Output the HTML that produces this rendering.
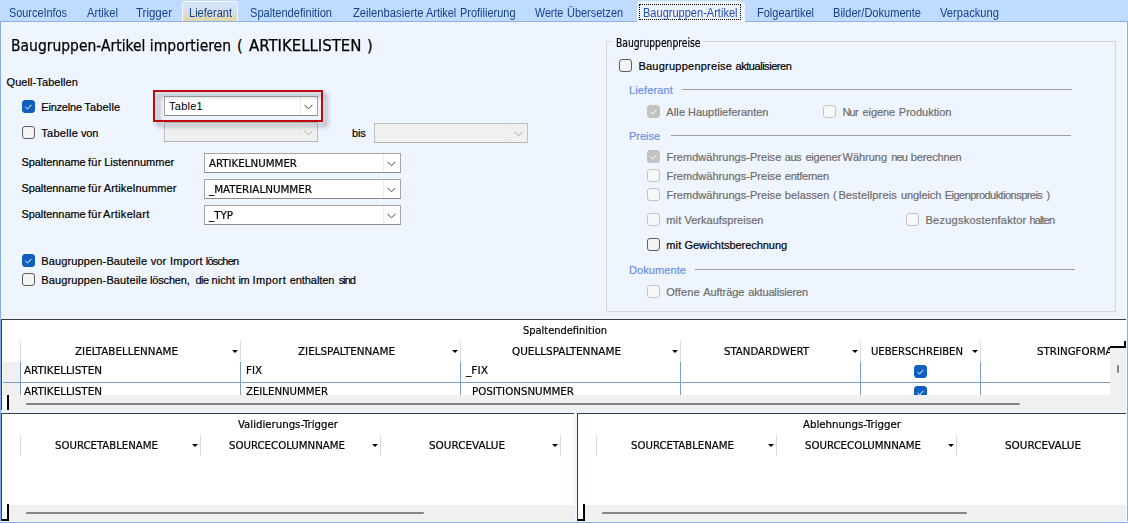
<!DOCTYPE html>
<html lang="de">
<head>
<meta charset="utf-8">
<title>Baugruppen-Artikel importieren</title>
<style>
html,body{margin:0;padding:0;}
body{width:1128px;height:523px;position:relative;overflow:hidden;background:#eff5fe;font-family:"Liberation Sans","DejaVu Sans",sans-serif;font-size:12px;color:#000;}
.abs,.t,.cb,.combo,.ln,.box{position:absolute;box-sizing:border-box;}
.t{white-space:pre;line-height:14px;height:14px;transform-origin:0 50%;}
/* tab bar */
#tabbar{left:0;top:0;width:1128px;height:22px;background:#bfdbff;border-bottom:1px solid #8fb1e6;}
.tab{font-size:12px;color:#15428b;top:6px;}
/* fonts */
.tah{font-family:"DejaVu Sans","Liberation Sans",sans-serif;font-stretch:condensed;font-size:11px;margin-top:1px;-webkit-text-stroke:0.2px currentColor;}
.seg{font-family:"Liberation Sans","DejaVu Sans",sans-serif;font-size:11px;-webkit-text-stroke:0.2px currentColor;}
.dis{color:#6d6d6d;}
.blue{color:#6a90e6;}
/* checkboxes */
.cb{width:13px;height:13px;border-radius:3px;border:1px solid #5f5f5f;background:#f4f4f4;}
.cb.on{background:#0f5fc0;border-color:#0f5fc0;}
.cb.don{background:#c2c2c2;border-color:#c2c2c2;}
.cb.doff{background:#f7f8fa;border-color:#c4c4c4;}
.cb svg{position:absolute;left:-1px;top:-1px;width:13px;height:13px;}
/* combos */
.combo{height:20px;border:1px solid #a4a4a4;border-bottom-color:#8c8c8c;background:#fff;}
.combo.d{background:#f0f0f0;border-color:#c0c0c0;border-bottom-color:#b4b4b4;}
.combo .btn{position:absolute;right:0;top:0;width:16px;height:18px;border-left:1px solid #ebebeb;}
.combo svg{position:absolute;right:4px;top:7px;width:9px;height:6px;}
.ln{height:1px;background:#a19a9a;}
/* grids */
.grid{background:#fff;}
.hsep{width:1px;background:#dcdcdc;}
.gl{background:#7d9cc8;}
.hd{font-family:"DejaVu Sans","Liberation Sans",sans-serif;font-stretch:condensed;font-size:11px;text-align:center;margin-top:1px;-webkit-text-stroke:0.2px currentColor;}
.arr{width:0;height:0;border-left:3px solid transparent;border-right:3px solid transparent;border-top:3px solid #000;}
.sb{background:#f0f0f0;}
.thumb{height:2px;background:#858585;border-radius:1px;}
.k{background:#000;}
</style>
</head>
<body>
<!-- TAB BAR -->
<div id="tabbar" class="abs"></div>
<div class="abs" style="left:182px;top:1px;width:56px;height:20px;border:1px solid #f4f8ff;border-bottom:none;border-radius:3px 3px 0 0;background:linear-gradient(#d2e4ff 0%,#d6e0ee 45%,#e4d6a6 100%);"></div>
<div class="abs" style="left:637px;top:1px;width:108px;height:22px;border-radius:4px 4px 0 0;background:#eff5fe;"></div>
<div class="abs" style="left:639px;top:4px;width:102px;height:16px;border:1px dotted #000;"></div>
<span class="t tab" style="left:9px;--w:58;transform:scaleX(0.9056);">SourceInfos</span>
<span class="t tab" style="left:87px;--w:31;transform:scaleX(0.9297);">Artikel</span>
<span class="t tab" style="left:136px;--w:36;transform:scaleX(0.9580);">Trigger</span>
<span class="t tab" style="left:189px;--w:43;transform:scaleX(0.9207);">Lieferant</span>
<span class="t tab" style="left:250px;--w:82;transform:scaleX(0.9241);">Spaltendefinition</span>
<span class="t tab" style="left:353px;--w:70.5;transform:scaleX(0.9353);">Zeilenbasierte</span> <span class="t tab" style="left:425.6px;--w:30.3;transform:scaleX(0.9087);">Artikel</span> <span class="t tab" style="left:460.2px;--w:55.5;transform:scaleX(0.9143);">Profilierung</span>
<span class="t tab" style="left:535.1px;--w:28.3;transform:scaleX(0.8900);">Werte</span> <span class="t tab" style="left:567.3px;--w:56.1;transform:scaleX(0.9141);">Übersetzen</span>
<span class="t tab" style="left:643px;color:#2148b8;--w:94.5;transform:scaleX(0.9198);">Baugruppen-Artikel</span>
<span class="t tab" style="left:757px;--w:57;transform:scaleX(0.9189);">Folgeartikel</span>
<span class="t tab" style="left:833px;--w:88;transform:scaleX(0.9225);">Bilder/Dokumente</span>
<span class="t tab" style="left:940px;--w:59;transform:scaleX(0.9307);">Verpackung</span>


<!-- TITLE -->
<span class="t" style="left:11px;top:36px;font-family:'DejaVu Sans','Liberation Sans',sans-serif;font-stretch:condensed;font-size:16px;line-height:20px;height:20px;-webkit-text-stroke:0.25px #000;--w:220;transform:scaleX(0.9664);">Baugruppen-Artikel importieren</span>
<span class="t" style="left:237px;top:36px;font-family:'DejaVu Sans','Liberation Sans',sans-serif;font-stretch:condensed;font-size:16px;line-height:20px;height:20px;-webkit-text-stroke:0.25px #000;">(</span>
<span class="t" style="left:249px;top:36px;font-family:'DejaVu Sans','Liberation Sans',sans-serif;font-stretch:condensed;font-size:16px;line-height:20px;height:20px;-webkit-text-stroke:0.25px #000;--w:112.5;transform:scaleX(1.0387);">ARTIKELLISTEN</span>
<span class="t" style="left:367px;top:36px;font-family:'DejaVu Sans','Liberation Sans',sans-serif;font-stretch:condensed;font-size:16px;line-height:20px;height:20px;-webkit-text-stroke:0.25px #000;">)</span>

<!-- LEFT FORM -->
<span class="t seg" style="left:6.5px;top:75px;--w:71.5;letter-spacing:0.084px;/*fit*/">Quell-Tabellen</span>

<div class="cb on" style="left:22px;top:100px;"><svg viewBox="0 0 13 13"><path d="M3.4 7 L5.6 9 L9.4 4.8" fill="none" stroke="#fff" stroke-width="1"/></svg></div>
<span class="t seg" style="left:41.3px;top:100px;--w:40.5;letter-spacing:-0.213px;/*fit*/">Einzelne</span> <span class="t seg" style="left:84.3px;top:100px;--w:36.0;letter-spacing:0.163px;/*fit*/">Tabelle</span>
<div class="combo" style="left:164px;top:96px;width:154px;"><div class="btn"></div><svg viewBox="0 0 9 6"><path d="M0.5 0.8 L4.5 4.8 L8.5 0.8" fill="none" stroke="#444" stroke-width="1"/></svg></div>
<span class="t seg" style="left:169px;top:99px;-webkit-text-stroke:0;--w:34;letter-spacing:0.263px;/*fit*/">Table1</span>

<div class="cb" style="left:22px;top:126px;"></div>
<span class="t seg" style="left:41.3px;top:126px;--w:36.8;letter-spacing:0.277px;/*fit*/">Tabelle</span> <span class="t seg" style="left:81.1px;top:126px;--w:16.9;letter-spacing:-0.283px;/*fit*/">von</span>
<div class="combo d" style="left:164px;top:122px;width:154px;"><div class="btn"></div><svg viewBox="0 0 9 6"><path d="M0.5 0.8 L4.5 4.8 L8.5 0.8" fill="none" stroke="#a8a8a8" stroke-width="1"/></svg></div>
<span class="t seg" style="left:352px;top:126px;--w:13.5;letter-spacing:-0.188px;/*fit*/">bis</span>
<div class="combo d" style="left:374px;top:123px;width:154px;"><div class="btn"></div><svg viewBox="0 0 9 6"><path d="M0.5 0.8 L4.5 4.8 L8.5 0.8" fill="none" stroke="#a8a8a8" stroke-width="1"/></svg></div>

<span class="t seg" style="left:21.5px;top:155px;--w:64.1;letter-spacing:-0.066px;/*fit*/">Spaltenname</span> <span class="t seg" style="left:88px;top:155px;--w:13.7;letter-spacing:0.285px;/*fit*/">für</span> <span class="t seg" style="left:104.2px;top:155px;--w:70.1;letter-spacing:0.033px;/*fit*/">Listennummer</span>
<div class="combo" style="left:204px;top:153px;width:197px;"><div class="btn"></div><svg viewBox="0 0 9 6"><path d="M0.5 0.8 L4.5 4.8 L8.5 0.8" fill="none" stroke="#444" stroke-width="1"/></svg></div>
<span class="t tah" style="left:209px;top:156px;--w:88;transform:scaleX(1.0364);">ARTIKELNUMMER</span>

<span class="t seg" style="left:21.5px;top:181px;--w:64.1;letter-spacing:-0.066px;/*fit*/">Spaltenname</span> <span class="t seg" style="left:88px;top:181px;--w:13.7;letter-spacing:0.285px;/*fit*/">für</span> <span class="t seg" style="left:103.7px;top:181px;--w:73.0;letter-spacing:0.161px;/*fit*/">Artikelnummer</span>
<div class="combo" style="left:204px;top:179px;width:197px;"><div class="btn"></div><svg viewBox="0 0 9 6"><path d="M0.5 0.8 L4.5 4.8 L8.5 0.8" fill="none" stroke="#444" stroke-width="1"/></svg></div>
<span class="t tah" style="left:209px;top:182px;--w:103;transform:scaleX(1.0444);">_MATERIALNUMMER</span>

<span class="t seg" style="left:21.5px;top:207px;--w:64.1;letter-spacing:-0.066px;/*fit*/">Spaltenname</span> <span class="t seg" style="left:88px;top:207px;--w:13.7;letter-spacing:0.285px;/*fit*/">für</span> <span class="t seg" style="left:103px;top:207px;--w:46.7;letter-spacing:0.329px;/*fit*/">Artikelart</span>
<div class="combo" style="left:204px;top:205px;width:197px;"><div class="btn"></div><svg viewBox="0 0 9 6"><path d="M0.5 0.8 L4.5 4.8 L8.5 0.8" fill="none" stroke="#444" stroke-width="1"/></svg></div>
<span class="t tah" style="left:209px;top:208px;--w:24;transform:scaleX(1.0435);">_TYP</span>

<div class="cb on" style="left:22px;top:254px;"><svg viewBox="0 0 13 13"><path d="M3.4 7 L5.6 9 L9.4 4.8" fill="none" stroke="#fff" stroke-width="1"/></svg></div>
<span class="t seg" style="left:41.3px;top:254px;--w:105.9;letter-spacing:0.134px;/*fit*/">Baugruppen-Bauteile</span> <span class="t seg" style="left:150.7px;top:254px;--w:15.5;letter-spacing:0.073px;/*fit*/">vor</span> <span class="t seg" style="left:170px;top:254px;--w:32.8;letter-spacing:0.269px;/*fit*/">Import</span> <span class="t seg" style="left:205.7px;top:254px;--w:32.8;letter-spacing:-0.732px;/*fit*/">löschen</span>
<div class="cb" style="left:22px;top:273px;"></div>
<span class="t seg" style="left:41.3px;top:273px;--w:105.9;letter-spacing:0.134px;/*fit*/">Baugruppen-Bauteile</span> <span class="t seg" style="left:150.1px;top:273px;--w:39.5;letter-spacing:-0.186px;/*fit*/">löschen,</span> <span class="t seg" style="left:195.5px;top:273px;--w:13.1;letter-spacing:-0.529px;/*fit*/">die</span> <span class="t seg" style="left:211.5px;top:273px;--w:23.5;letter-spacing:0.050px;/*fit*/">nicht</span> <span class="t seg" style="left:238.5px;top:273px;--w:10.5;letter-spacing:-0.555px;/*fit*/">im</span> <span class="t seg" style="left:252.5px;top:273px;--w:33.6;letter-spacing:0.402px;/*fit*/">Import</span> <span class="t seg" style="left:289.7px;top:273px;--w:44.7;letter-spacing:-0.063px;/*fit*/">enthalten</span> <span class="t seg" style="left:338.8px;top:273px;--w:16.1;letter-spacing:-1.022px;/*fit*/">sind</span>

<div class="abs" style="left:153px;top:90px;width:170px;height:32px;border:2px solid #bd0a10;filter:drop-shadow(4px 4px 2.5px rgba(40,45,60,0.55));z-index:5;"></div>
<!-- RIGHT GROUP BOX -->
<div class="box" style="left:606px;top:41px;width:510px;height:271px;border:1px solid #d9d7d5;"></div>
<div class="abs" style="left:612px;top:38px;width:91px;height:8px;background:#eff5fe;"></div>
<span class="t tah" style="left:615.5px;top:35px;font-size:11.5px;--w:84.5;transform:scaleX(0.8893);">Baugruppenpreise</span>

<div class="cb" style="left:619px;top:59px;"></div>
<span class="t seg" style="left:638.4px;top:59px;--w:93.8;letter-spacing:0.243px;/*fit*/">Baugruppenpreise</span> <span class="t seg" style="left:735.6px;top:59px;--w:55.7;letter-spacing:-0.467px;/*fit*/">aktualisieren</span>

<span class="t seg blue" style="left:629px;top:83px;--w:44;letter-spacing:0.132px;/*fit*/">Lieferant</span>
<div class="ln" style="left:682px;top:89px;width:390px;"></div>
<div class="cb don" style="left:647px;top:105px;"><svg viewBox="0 0 13 13"><path d="M3.4 7 L5.6 9 L9.4 4.8" fill="none" stroke="#fff" stroke-width="1"/></svg></div>
<span class="t seg dis" style="left:666.2px;top:105px;--w:19.1;letter-spacing:0.189px;/*fit*/">Alle</span> <span class="t seg dis" style="left:688px;top:105px;--w:80.4;letter-spacing:-0.021px;/*fit*/">Hauptlieferanten</span>
<div class="cb doff" style="left:823px;top:105px;"></div>
<span class="t seg dis" style="left:842.4px;top:105px;--w:15.6;letter-spacing:-0.711px;/*fit*/">Nur</span> <span class="t seg dis" style="left:862.6px;top:105px;--w:32.4;letter-spacing:-0.108px;/*fit*/">eigene</span> <span class="t seg dis" style="left:898.8px;top:105px;--w:52.6;letter-spacing:0.001px;/*fit*/">Produktion</span>

<span class="t seg blue" style="left:629px;top:129px;--w:31;letter-spacing:-0.031px;/*fit*/">Preise</span>
<div class="ln" style="left:671px;top:135px;width:400px;"></div>
<div class="cb don" style="left:647px;top:150px;"><svg viewBox="0 0 13 13"><path d="M3.4 7 L5.6 9 L9.4 4.8" fill="none" stroke="#fff" stroke-width="1"/></svg></div>
<span class="t seg dis" style="left:666.4px;top:150px;--w:114.9;letter-spacing:0.029px;/*fit*/">Fremdwährungs-Preise</span> <span class="t seg dis" style="left:784.8px;top:150px;--w:16.3;letter-spacing:-0.483px;/*fit*/">aus</span> <span class="t seg dis" style="left:805.4px;top:150px;--w:35.5;letter-spacing:-0.172px;/*fit*/">eigener</span> <span class="t seg dis" style="left:842.6px;top:150px;--w:44.4;letter-spacing:-0.034px;/*fit*/">Währung</span> <span class="t seg dis" style="left:891.2px;top:150px;--w:16.0;letter-spacing:-0.786px;/*fit*/">neu</span> <span class="t seg dis" style="left:910.7px;top:150px;--w:50.7;letter-spacing:-0.144px;/*fit*/">berechnen</span>
<div class="cb doff" style="left:647px;top:169px;"></div>
<span class="t seg dis" style="left:666.4px;top:169px;--w:114.9;letter-spacing:0.029px;/*fit*/">Fremdwährungs-Preise</span> <span class="t seg dis" style="left:784.8px;top:169px;--w:44.0;letter-spacing:-0.276px;/*fit*/">entfernen</span>
<div class="cb doff" style="left:647px;top:188px;"></div>
<span class="t seg dis" style="left:666.4px;top:188px;--w:114.9;letter-spacing:0.029px;/*fit*/">Fremdwährungs-Preise</span> <span class="t seg dis" style="left:784.8px;top:188px;--w:44.7;letter-spacing:0.082px;/*fit*/">belassen</span> <span class="t seg dis" style="left:833px;top:188px;">(</span> <span class="t seg dis" style="left:838.4px;top:188px;--w:58.5;letter-spacing:0.137px;/*fit*/">Bestellpreis</span> <span class="t seg dis" style="left:901.1px;top:188px;--w:40.1;letter-spacing:-0.111px;/*fit*/">ungleich</span> <span class="t seg dis" style="left:944.8px;top:188px;--w:97.5;letter-spacing:-0.541px;/*fit*/">Eigenproduktionspreis</span> <span class="t seg dis" style="left:1046.5px;top:188px;">)</span>
<div class="cb doff" style="left:647px;top:213px;"></div>
<span class="t seg dis" style="left:666.2px;top:213px;--w:15.3;letter-spacing:0.209px;/*fit*/">mit</span> <span class="t seg dis" style="left:684.5px;top:213px;--w:78.9;letter-spacing:0.001px;/*fit*/">Verkaufspreisen</span>
<div class="cb doff" style="left:906px;top:213px;"></div>
<span class="t seg dis" style="left:925.5px;top:213px;--w:101.0;letter-spacing:0.243px;/*fit*/">Bezugskostenfaktor</span> <span class="t seg dis" style="left:1029.5px;top:213px;--w:24.8;letter-spacing:-0.864px;/*fit*/">halten</span>
<div class="cb" style="left:647px;top:238px;"></div>
<span class="t seg" style="left:666.2px;top:238px;--w:15.3;letter-spacing:0.209px;/*fit*/">mit</span> <span class="t seg" style="left:684.5px;top:238px;--w:102.6;letter-spacing:-0.041px;/*fit*/">Gewichtsberechnung</span>

<span class="t seg blue" style="left:629px;top:263px;--w:57;letter-spacing:0.082px;/*fit*/">Dokumente</span>
<div class="ln" style="left:695px;top:269px;width:380px;"></div>
<div class="cb doff" style="left:647px;top:285px;"></div>
<span class="t seg dis" style="left:666.2px;top:285px;--w:33.6;letter-spacing:0.129px;/*fit*/">Offene</span> <span class="t seg dis" style="left:703.2px;top:285px;--w:41.2;letter-spacing:-0.049px;/*fit*/">Aufträge</span> <span class="t seg dis" style="left:748.2px;top:285px;--w:59.8;letter-spacing:-0.151px;/*fit*/">aktualisieren</span>

<!-- UPPER GRID -->
<div class="abs" style="left:1px;top:319px;width:1125px;height:1px;background:#3c3c3c;"></div>
<div class="abs" style="left:1px;top:319px;width:1px;height:91px;background:#3c3c3c;"></div>
<div class="abs grid" style="left:2px;top:320px;width:1124px;height:90px;"></div>
<span class="t tah" style="left:523px;top:323px;--w:84;transform:scaleX(0.9974);">Spaltendefinition</span>
<div class="abs hsep" style="left:20px;top:341px;height:21px;"></div>
<div class="abs hsep" style="left:240px;top:341px;height:21px;"></div>
<div class="abs hsep" style="left:460px;top:341px;height:21px;"></div>
<div class="abs hsep" style="left:680px;top:341px;height:21px;"></div>
<div class="abs hsep" style="left:860px;top:341px;height:21px;"></div>
<div class="abs hsep" style="left:980px;top:341px;height:21px;"></div>
<div class="abs arr" style="left:232px;top:350px;"></div>
<div class="abs arr" style="left:452px;top:350px;"></div>
<div class="abs arr" style="left:672px;top:350px;"></div>
<div class="abs arr" style="left:852px;top:350px;"></div>
<div class="abs arr" style="left:972px;top:350px;"></div>
<span class="t hd" style="left:75px;top:344px;--w:103;transform:scaleX(1.0449);">ZIELTABELLENNAME</span>
<span class="t hd" style="left:298px;top:344px;--w:97;transform:scaleX(1.0494);">ZIELSPALTENNAME</span>
<span class="t hd" style="left:512px;top:344px;--w:109;transform:scaleX(1.0554);">QUELLSPALTENNAME</span>
<span class="t hd" style="left:724px;top:344px;--w:85;transform:scaleX(1.0303);">STANDARDWERT</span>
<span class="t hd" style="left:870.5px;top:344px;--w:92;transform:scaleX(1.0160);">UEBERSCHREIBEN</span>
<span class="t hd" style="left:1037px;top:344px;--w:81;transform:scaleX(1.0378);">STRINGFORMAT</span>
<div class="abs" style="left:3px;top:362px;width:17px;height:33px;background:#f0f0f0;"></div>
<div class="abs gl" style="left:20px;top:362px;width:1px;height:33px;"></div>
<div class="abs gl" style="left:240px;top:362px;width:1px;height:33px;"></div>
<div class="abs gl" style="left:460px;top:362px;width:1px;height:33px;"></div>
<div class="abs gl" style="left:680px;top:362px;width:1px;height:33px;"></div>
<div class="abs gl" style="left:860px;top:362px;width:1px;height:33px;"></div>
<div class="abs gl" style="left:980px;top:362px;width:1px;height:33px;"></div>
<div class="abs gl" style="left:3px;top:382px;width:1107px;height:1px;"></div>
<span class="t tah" style="left:24px;top:363px;--w:78;transform:scaleX(1.0474);">ARTIKELLISTEN</span>
<span class="t tah" style="left:246px;top:363px;--w:16;transform:scaleX(1.0396);">FIX</span>
<span class="t tah" style="left:466px;top:363px;--w:22;transform:scaleX(1.0814);">_FIX</span>
<span class="t tah" style="left:24px;top:384px;--w:78;transform:scaleX(1.0474);">ARTIKELLISTEN</span>
<span class="t tah" style="left:246px;top:384px;--w:82;transform:scaleX(1.0254);">ZEILENNUMMER</span>
<span class="t tah" style="left:472px;top:384px;--w:102;transform:scaleX(1.0382);">POSITIONSNUMMER</span>
<div class="cb on" style="left:914px;top:365px;"><svg viewBox="0 0 13 13"><path d="M3.4 7 L5.6 9 L9.4 4.8" fill="none" stroke="#fff" stroke-width="1"/></svg></div>
<div class="cb on" style="left:914px;top:386px;"><svg viewBox="0 0 13 13"><path d="M3.4 7 L5.6 9 L9.4 4.8" fill="none" stroke="#fff" stroke-width="1"/></svg></div>
<div class="abs sb" style="left:2px;top:395px;width:1124px;height:15px;"></div>
<div class="abs sb" style="left:1110px;top:347px;width:16px;height:63px;"></div>
<div class="abs thumb" style="left:26px;top:403px;width:994px;"></div>
<div class="abs" style="left:1117px;top:365px;width:2px;height:8px;background:#858585;border-radius:1px;"></div>
<div class="abs" style="left:2px;top:395px;width:5px;height:15px;background:#fff;"></div>
<div class="abs k" style="left:7px;top:395px;width:2px;height:15px;"></div>
<div class="abs k" style="left:1110px;top:346px;width:16px;height:2px;"></div>
<div class="abs k" style="left:1124px;top:341px;width:2px;height:6px;"></div>
<div class="abs" style="left:2px;top:410px;width:1123px;height:3px;background:#eff5fe;"></div>
<!-- LOWER LEFT GRID -->
<div class="abs" style="left:1px;top:413px;width:573px;height:1px;background:#3c3c3c;"></div>
<div class="abs" style="left:1px;top:413px;width:1px;height:108px;background:#3c3c3c;"></div>
<div class="abs grid" style="left:2px;top:414px;width:572px;height:91px;"></div>
<span class="t tah" style="left:238px;top:417px;--w:100;transform:scaleX(1.0289);">Validierungs-Trigger</span>
<div class="abs hsep" style="left:20px;top:435px;height:21px;"></div>
<div class="abs hsep" style="left:200px;top:435px;height:21px;"></div>
<div class="abs hsep" style="left:380px;top:435px;height:21px;"></div>
<div class="abs hsep" style="left:560px;top:435px;height:21px;"></div>
<div class="abs arr" style="left:192px;top:444px;"></div>
<div class="abs arr" style="left:372px;top:444px;"></div>
<div class="abs arr" style="left:552px;top:444px;"></div>
<span class="t hd" style="left:55px;top:438px;--w:103;transform:scaleX(1.0271);">SOURCETABLENAME</span>
<span class="t hd" style="left:228.5px;top:438px;--w:116;transform:scaleX(1.0300);">SOURCECOLUMNNAME</span>
<span class="t hd" style="left:428.5px;top:438px;--w:76;transform:scaleX(1.0540);">SOURCEVALUE</span>
<div class="abs sb" style="left:2px;top:505px;width:572px;height:16px;"></div>
<div class="abs thumb" style="left:26px;top:512px;width:398px;"></div>
<div class="abs" style="left:2px;top:505px;width:6px;height:14px;background:#fff;"></div>
<div class="abs k" style="left:7px;top:504px;width:2px;height:17px;"></div>
<div class="abs k" style="left:2px;top:519px;width:7px;height:2px;"></div>
<div class="abs" style="left:574px;top:413px;width:3px;height:108px;background:#eff5fe;"></div>
<!-- LOWER RIGHT GRID -->
<div class="abs" style="left:577px;top:413px;width:549px;height:1px;background:#3c3c3c;"></div>
<div class="abs" style="left:577px;top:413px;width:1px;height:108px;background:#3c3c3c;"></div>
<div class="abs grid" style="left:578px;top:414px;width:548px;height:91px;"></div>
<span class="t tah" style="left:803px;top:417px;--w:98;transform:scaleX(1.0319);">Ablehnungs-Trigger</span>
<div class="abs hsep" style="left:596px;top:435px;height:21px;"></div>
<div class="abs hsep" style="left:776px;top:435px;height:21px;"></div>
<div class="abs hsep" style="left:956px;top:435px;height:21px;"></div>
<div class="abs arr" style="left:768px;top:444px;"></div>
<div class="abs arr" style="left:948px;top:444px;"></div>
<span class="t hd" style="left:631px;top:438px;--w:103;transform:scaleX(1.0271);">SOURCETABLENAME</span>
<span class="t hd" style="left:804.5px;top:438px;--w:116;transform:scaleX(1.0300);">SOURCECOLUMNNAME</span>
<span class="t hd" style="left:1005px;top:438px;--w:76;transform:scaleX(1.0540);">SOURCEVALUE</span>
<div class="abs sb" style="left:578px;top:505px;width:548px;height:16px;"></div>
<div class="abs thumb" style="left:602px;top:512px;width:365px;"></div>
<div class="abs" style="left:578px;top:505px;width:5px;height:14px;background:#fff;"></div>
<div class="abs k" style="left:583px;top:504px;width:2px;height:17px;"></div>
<div class="abs k" style="left:578px;top:519px;width:7px;height:2px;"></div>
<!-- window edges -->
<div class="abs" style="left:0;top:22px;width:1px;height:501px;background:#86adec;"></div>
<div class="abs" style="left:1126px;top:22px;width:1px;height:501px;background:#f6f9ff;"></div>
<div class="abs" style="left:1127px;top:22px;width:1px;height:501px;background:#8aaee6;"></div>
<div class="abs" style="left:0;top:521px;width:1128px;height:1px;background:#f3f7fe;"></div>
<div class="abs" style="left:0;top:522px;width:1128px;height:1px;background:#8aaee6;"></div>
</body>
</html>
